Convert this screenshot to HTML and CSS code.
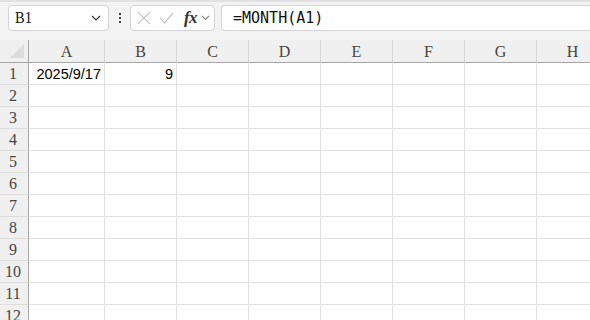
FILE: index.html
```html
<!DOCTYPE html>
<html lang="zh">
<head>
    <meta charset="utf-8">
    <title>MONTH</title>
    <link rel="stylesheet" href="styles.css">
</head>
<body>
    <div class="toolbar">
        <div class="name-box">
            <span class="name-text">B1</span>
            <svg class="chevron" width="10" height="6" viewBox="0 0 10 6"><path d="M1 1 L5 5 L9 1" fill="none" stroke="#333" stroke-width="1.2"/></svg>
        </div>
        <div class="dots">
            <span></span><span></span><span></span>
        </div>
        <div class="fx-box">
            <svg width="14" height="14" viewBox="0 0 14 14"><path d="M1 1 L13 13 M13 1 L1 13" stroke="#bdbdbd" stroke-width="1.1" fill="none"/></svg>
            <svg class="check" width="15" height="12" viewBox="0 0 15 12"><path d="M1 6 L5.5 11 L14 1" stroke="#bdbdbd" stroke-width="1.1" fill="none"/></svg>
            <span class="fx">fx</span>
            <svg width="9" height="6" viewBox="0 0 9 6"><path d="M1 1 L4.5 4.5 L8 1" fill="none" stroke="#888" stroke-width="1.1"/></svg>
        </div>
        <div class="formula">=MONTH(A1)</div>
    </div>
    <div class="sheet">
        <div class="row head">
            <div class="corner"><span class="tri"></span></div>
            <div class="cell col-a">A</div>
            <div class="cell">B</div>
            <div class="cell">C</div>
            <div class="cell">D</div>
            <div class="cell">E</div>
            <div class="cell">F</div>
            <div class="cell">G</div>
            <div class="cell">H</div>
        </div>
        <div class="row">
            <div class="num">1</div>
            <div class="cell col-a right">2025/9/17</div>
            <div class="cell right">9</div>
            <div class="cell"></div><div class="cell"></div><div class="cell"></div><div class="cell"></div><div class="cell"></div><div class="cell"></div>
        </div>
        <div class="row"><div class="num">2</div><div class="cell col-a"></div><div class="cell"></div><div class="cell"></div><div class="cell"></div><div class="cell"></div><div class="cell"></div><div class="cell"></div><div class="cell"></div></div>
        <div class="row"><div class="num">3</div><div class="cell col-a"></div><div class="cell"></div><div class="cell"></div><div class="cell"></div><div class="cell"></div><div class="cell"></div><div class="cell"></div><div class="cell"></div></div>
        <div class="row"><div class="num">4</div><div class="cell col-a"></div><div class="cell"></div><div class="cell"></div><div class="cell"></div><div class="cell"></div><div class="cell"></div><div class="cell"></div><div class="cell"></div></div>
        <div class="row"><div class="num">5</div><div class="cell col-a"></div><div class="cell"></div><div class="cell"></div><div class="cell"></div><div class="cell"></div><div class="cell"></div><div class="cell"></div><div class="cell"></div></div>
        <div class="row"><div class="num">6</div><div class="cell col-a"></div><div class="cell"></div><div class="cell"></div><div class="cell"></div><div class="cell"></div><div class="cell"></div><div class="cell"></div><div class="cell"></div></div>
        <div class="row"><div class="num">7</div><div class="cell col-a"></div><div class="cell"></div><div class="cell"></div><div class="cell"></div><div class="cell"></div><div class="cell"></div><div class="cell"></div><div class="cell"></div></div>
        <div class="row"><div class="num">8</div><div class="cell col-a"></div><div class="cell"></div><div class="cell"></div><div class="cell"></div><div class="cell"></div><div class="cell"></div><div class="cell"></div><div class="cell"></div></div>
        <div class="row"><div class="num">9</div><div class="cell col-a"></div><div class="cell"></div><div class="cell"></div><div class="cell"></div><div class="cell"></div><div class="cell"></div><div class="cell"></div><div class="cell"></div></div>
        <div class="row"><div class="num">10</div><div class="cell col-a"></div><div class="cell"></div><div class="cell"></div><div class="cell"></div><div class="cell"></div><div class="cell"></div><div class="cell"></div><div class="cell"></div></div>
        <div class="row"><div class="num">11</div><div class="cell col-a"></div><div class="cell"></div><div class="cell"></div><div class="cell"></div><div class="cell"></div><div class="cell"></div><div class="cell"></div><div class="cell"></div></div>
        <div class="row"><div class="num">12</div><div class="cell col-a"></div><div class="cell"></div><div class="cell"></div><div class="cell"></div><div class="cell"></div><div class="cell"></div><div class="cell"></div><div class="cell"></div></div>
    </div>
</body>
</html>
```
FILE: styles.css
```css
body {
    margin: 0;
    padding: 0;
    background-color: #fff;
    font-family: "Liberation Sans", Arial, sans-serif;
    overflow: hidden;
    width: 590px;
    height: 320px;
}
.toolbar {
    display: flex;
    align-items: center;
    height: 38px;
    padding-top: 0;
    border-top: 2px solid #e2e2e2;
    background-color: #f3f3f3;
    box-sizing: content-box;
}
.name-box {
    display: flex;
    align-items: center;
    justify-content: space-between;
    box-sizing: border-box;
    width: 101px;
    height: 26px;
    margin-left: 8px;
    margin-top: -6px;
    padding: 0 7px 0 6px;
    background-color: #fff;
    border: 1px solid #d4d4d4;
    border-radius: 4px;
}
.name-text {
    font-family: "Liberation Serif", serif;
    font-size: 17px;
    color: #111;
    transform: scaleX(0.85);
    transform-origin: left center;
}
.dots {
    display: flex;
    flex-direction: column;
    gap: 2px;
    width: 21px;
    align-items: center;
    margin-top: -6px;
}
.dots span {
    width: 2px;
    height: 2px;
    background-color: #444;
}
.fx-box {
    display: flex;
    align-items: center;
    box-sizing: border-box;
    width: 85px;
    height: 26px;
    margin-top: -6px;
    padding: 0 4px 0 6px;
    background-color: #fff;
    border: 1px solid #d4d4d4;
    border-radius: 4px;
}
.check {
    margin-left: 8px;
}
.fx {
    font-family: "Liberation Serif", serif;
    font-style: italic;
    font-weight: bold;
    font-size: 17px;
    color: #333;
    margin-left: 10px;
    margin-right: 4px;
    letter-spacing: -0.5px;
}
.formula {
    flex: 1;
    box-sizing: border-box;
    height: 26px;
    margin-left: 6px;
    margin-top: -6px;
    padding-left: 11px;
    background-color: #fff;
    border: 1px solid #d4d4d4;
    border-right: none;
    border-radius: 4px 0 0 4px;
    font-family: "DejaVu Sans Mono", monospace;
    font-size: 15px;
    line-height: 24px;
    color: #111;
}
.sheet {
    display: flex;
    flex-direction: column;
}
.row {
    display: flex;
    height: 22px;
}
.row.head {
    height: 23px;
    background-color: #f0f0f0;
}
.corner, .num {
    box-sizing: border-box;
    width: 29px;
    flex-shrink: 0;
    border-right: 1px solid #a6a6a6;
}
.corner {
    position: relative;
    border-bottom: 1px solid #a6a6a6;
}
.tri {
    position: absolute;
    right: 4px;
    bottom: 4px;
    width: 0;
    height: 0;
    border-left: 14px solid transparent;
    border-bottom: 14px solid #dcdcdc;
}
.num {
    background-color: #f0f0f0;
    border-bottom: 1px solid #dcdcdc;
    font-family: "Liberation Serif", serif;
    font-size: 16px;
    color: #444;
    text-align: center;
    line-height: 22px;
    padding-right: 2px;
}
.cell {
    box-sizing: border-box;
    width: 72px;
    flex-shrink: 0;
    border-right: 1px solid #e0e0e0;
    border-bottom: 1px solid #e0e0e0;
    font-size: 14.5px;
    line-height: 22px;
    padding: 0 3px;
    color: #000;
    white-space: nowrap;
}
.cell.col-a {
    width: 76px;
}
.cell.right {
    text-align: right;
}
.head .cell {
    border-right-color: #d8d8d8;
    border-bottom: 1px solid #a6a6a6;
    font-family: "Liberation Serif", serif;
    font-size: 16px;
    color: #444;
    text-align: center;
    line-height: 24px;
}
```
